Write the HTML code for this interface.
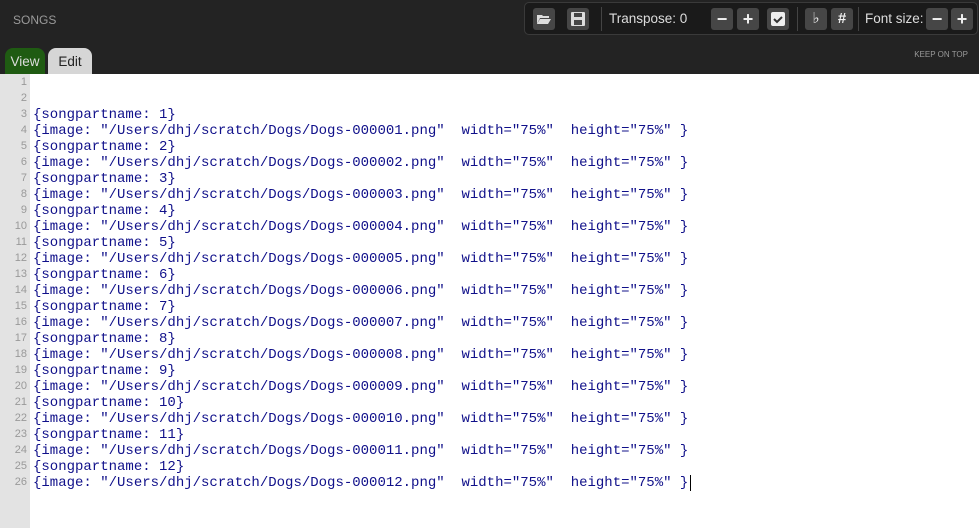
<!DOCTYPE html>
<html><head><style>
body{margin:0;width:979px;height:528px;overflow:hidden;background:#fff;font-family:"Liberation Sans",sans-serif}
#top{position:absolute;left:0;top:0;width:979px;height:74px;background:#232323}
.songs{position:absolute;left:13px;top:13px;color:#9a9a9a;font-size:12px}
.tb{position:absolute;left:524px;top:2px;width:452px;height:31px;background:#1a1a1a;border:1px solid #3a3a3a;border-radius:5px}
.b{position:absolute;top:5px;width:22px;height:22px;background:#464646;border-radius:3px;color:#eee;font-size:18px;font-weight:bold;text-align:center;line-height:22px}
.sep{position:absolute;top:4px;width:1px;height:24px;background:#444}
.lbl{position:absolute;top:8px;color:#ddd;font-size:13.5px}
.kot{position:absolute;right:11px;top:50px;color:#999;font-size:8px}
.tab{position:absolute;top:48px;height:26px;font-size:13.5px;line-height:28px;border-radius:8px 8px 0 0}
#gut{position:absolute;left:0;top:74px;width:30px;height:454px;background:#e3e3e3}
.ln{position:absolute;left:0;width:27px;text-align:right;font-family:"Liberation Sans",sans-serif;font-size:11px;color:#999}
#code{position:absolute;left:33px;top:75px;font-family:"Liberation Mono",monospace;font-size:14px;line-height:16px;color:#10108a;white-space:pre}
</style></head><body>
<div id="top">
<div class="songs">SONGS</div>
<div class="tb">
<div class="b" style="left:8px"><svg width="14" height="12" viewBox="0 0 14 12" style="margin-top:5px"><path d="M0 2h5l1 1h6v2H3L0 11z" fill="#ddd"/><path d="M3 6h11l-3 5H0z" fill="#ddd"/></svg></div>
<div class="b" style="left:42px"><svg width="14" height="14" viewBox="0 0 14 14" style="margin-top:4px"><rect x="0" y="0" width="14" height="14" rx="1" fill="#ddd"/><rect x="3" y="1" width="8" height="4" fill="#464646"/><rect x="3" y="8" width="8" height="5" fill="#464646"/></svg></div>
<div class="sep" style="left:76px"></div>
<div class="lbl" style="left:84px">Transpose: 0</div>
<div class="b" style="left:186px">−</div>
<div class="b" style="left:212px">+</div>
<div class="b" style="left:242px"><svg width="14" height="14" viewBox="0 0 14 14" style="margin-top:4px"><rect width="14" height="14" rx="2" fill="#eee"/><path d="M3 7l3 3 5-5" stroke="#333" stroke-width="2" fill="none"/></svg></div>
<div class="sep" style="left:272px"></div>
<div class="b" style="left:280px;font-weight:normal;font-size:15px">♭</div>
<div class="b" style="left:306px;font-size:15px">#</div>
<div class="sep" style="left:333px"></div>
<div class="lbl" style="left:340px">Font size:</div>
<div class="b" style="left:401px">−</div>
<div class="b" style="left:426px">+</div>
</div>
<div class="kot">KEEP ON TOP</div>
<div class="tab" style="left:5px;width:40px;background:#1f5b12;color:#ddd;text-align:center">View</div>
<div class="tab" style="left:48px;width:44px;background:#d6d6d6;color:#222;text-align:center">Edit</div>
</div>
<div id="gut"></div>
<div id="code">

{songpartname: 1}
{image: "/Users/dhj/scratch/Dogs/Dogs-000001.png"  width="75%"  height="75%" }
{songpartname: 2}
{image: "/Users/dhj/scratch/Dogs/Dogs-000002.png"  width="75%"  height="75%" }
{songpartname: 3}
{image: "/Users/dhj/scratch/Dogs/Dogs-000003.png"  width="75%"  height="75%" }
{songpartname: 4}
{image: "/Users/dhj/scratch/Dogs/Dogs-000004.png"  width="75%"  height="75%" }
{songpartname: 5}
{image: "/Users/dhj/scratch/Dogs/Dogs-000005.png"  width="75%"  height="75%" }
{songpartname: 6}
{image: "/Users/dhj/scratch/Dogs/Dogs-000006.png"  width="75%"  height="75%" }
{songpartname: 7}
{image: "/Users/dhj/scratch/Dogs/Dogs-000007.png"  width="75%"  height="75%" }
{songpartname: 8}
{image: "/Users/dhj/scratch/Dogs/Dogs-000008.png"  width="75%"  height="75%" }
{songpartname: 9}
{image: "/Users/dhj/scratch/Dogs/Dogs-000009.png"  width="75%"  height="75%" }
{songpartname: 10}
{image: "/Users/dhj/scratch/Dogs/Dogs-000010.png"  width="75%"  height="75%" }
{songpartname: 11}
{image: "/Users/dhj/scratch/Dogs/Dogs-000011.png"  width="75%"  height="75%" }
{songpartname: 12}
{image: "/Users/dhj/scratch/Dogs/Dogs-000012.png"  width="75%"  height="75%" }<span style="border-left:1.5px solid #000;margin-left:2px"> </span></div>
<div style="position:absolute;left:0;top:76px">
<div class="ln" style="top:0">1</div><div class="ln" style="top:16px">2</div><div class="ln" style="top:32px">3</div><div class="ln" style="top:48px">4</div><div class="ln" style="top:64px">5</div><div class="ln" style="top:80px">6</div><div class="ln" style="top:96px">7</div><div class="ln" style="top:112px">8</div><div class="ln" style="top:128px">9</div><div class="ln" style="top:144px">10</div><div class="ln" style="top:160px">11</div><div class="ln" style="top:176px">12</div><div class="ln" style="top:192px">13</div><div class="ln" style="top:208px">14</div><div class="ln" style="top:224px">15</div><div class="ln" style="top:240px">16</div><div class="ln" style="top:256px">17</div><div class="ln" style="top:272px">18</div><div class="ln" style="top:288px">19</div><div class="ln" style="top:304px">20</div><div class="ln" style="top:320px">21</div><div class="ln" style="top:336px">22</div><div class="ln" style="top:352px">23</div><div class="ln" style="top:368px">24</div><div class="ln" style="top:384px">25</div><div class="ln" style="top:400px">26</div>
</div>
</body></html>
